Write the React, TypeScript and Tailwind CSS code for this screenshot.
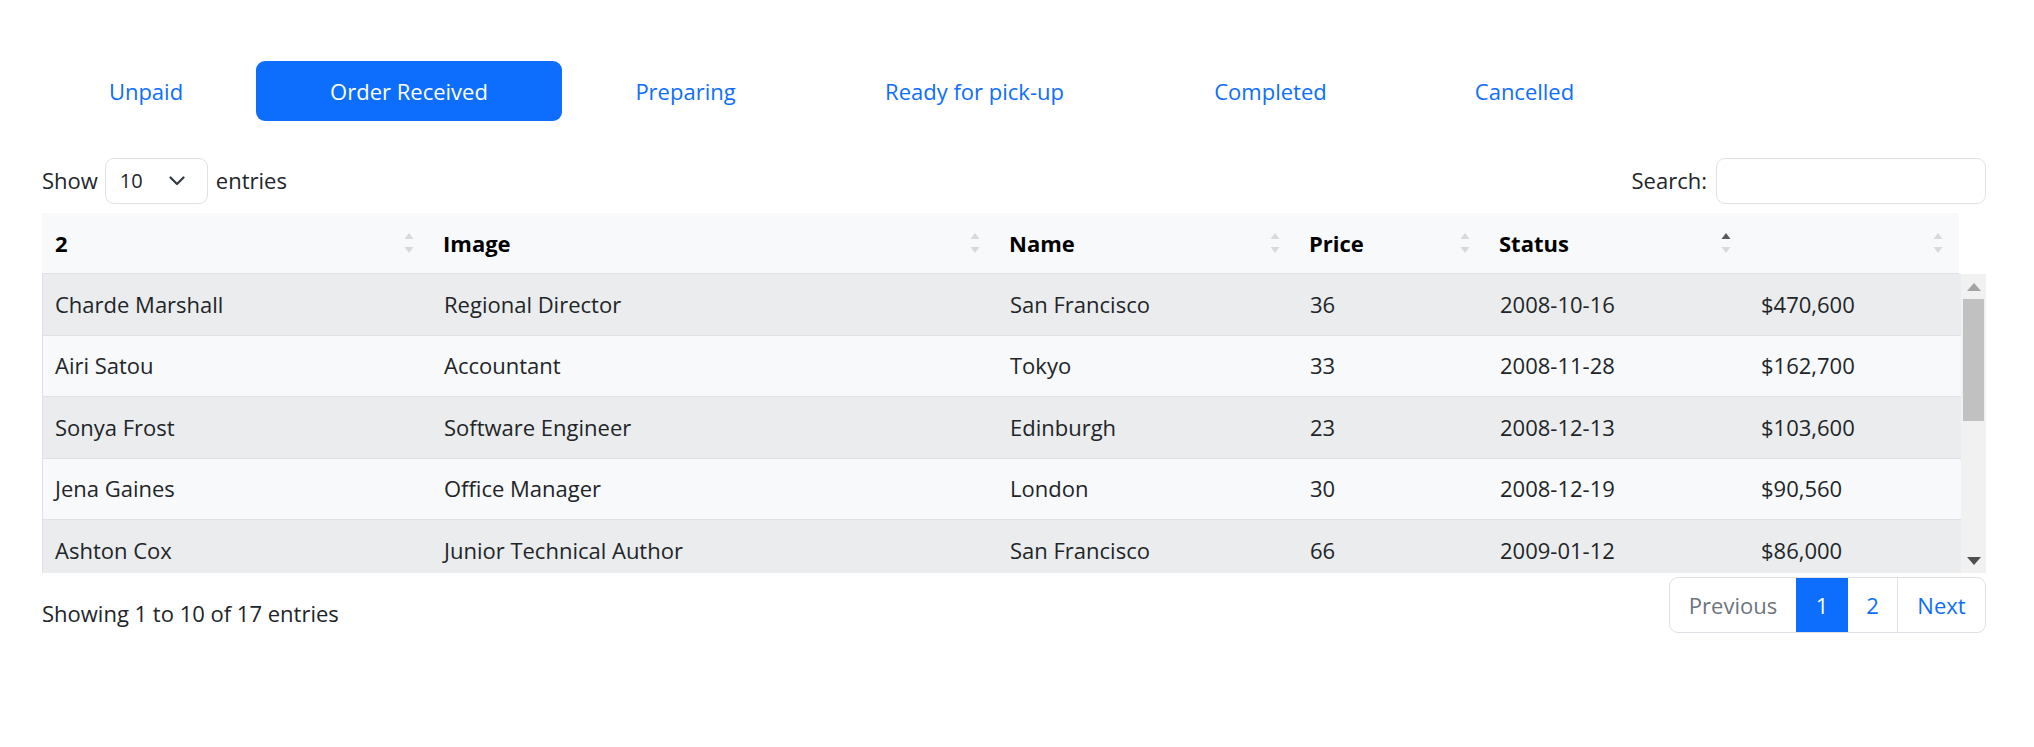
import React from 'react';

const tabs = [
  { label: 'Unpaid', w: 'w-[220px]' },
  { label: 'Order Received', w: 'w-[306px]', active: true },
  { label: 'Preparing', w: 'w-[247px]' },
  { label: 'Ready for pick-up', w: 'w-[331px]' },
  { label: 'Completed', w: 'w-[261px]' },
  { label: 'Cancelled', w: 'w-[247px]' },
];

const cols = [
  { title: '2', w: 'w-[388px]' },
  { title: 'Image', w: 'w-[566px]' },
  { title: 'Name', w: 'w-[300px]' },
  { title: 'Price', w: 'w-[190px]' },
  { title: 'Status', w: 'w-[261px]', sorted: true },
  { title: '', w: 'w-[212px]' },
];

// only the rows that show inside the 200px scroll area
const rows = [
  ['Charde Marshall', 'Regional Director', 'San Francisco', '36', '2008-10-16', '$470,600'],
  ['Airi Satou', 'Accountant', 'Tokyo', '33', '2008-11-28', '$162,700'],
  ['Sonya Frost', 'Software Engineer', 'Edinburgh', '23', '2008-12-13', '$103,600'],
  ['Jena Gaines', 'Office Manager', 'London', '30', '2008-12-19', '$90,560'],
  ['Ashton Cox', 'Junior Technical Author', 'San Francisco', '66', '2009-01-12', '$86,000'],
];

const SortIcon = ({ up = false }: { up?: boolean }) => (
  <svg width="10" height="20" viewBox="0 0 10 20">
    <path d="M0.5 6 L5 0 L9.5 6Z" fill={up ? '#5a5a5a' : '#d9d9d9'} />
    <path d="M0.5 14 L5 20 L9.5 14Z" fill="#d9d9d9" />
  </svg>
);

const Tri = ({ down = false, color }: { down?: boolean; color: string }) => (
  <svg width="14" height="8" viewBox="0 0 14 8">
    <path d={down ? 'M0 0 L14 0 L7 8Z' : 'M0 8 L14 8 L7 0Z'} fill={color} />
  </svg>
);

export default function App() {
  return (
    <div className="min-h-screen bg-white pl-[42px] pr-[48px] pt-[61px] font-['Open_Sans',sans-serif] text-[22px] text-[#212529]">
      {/* status tabs */}
      <div className="-ml-[6px] flex h-[60px]">
        {tabs.map((t) => (
          <div
            key={t.label}
            className={`${t.w} flex items-center justify-center rounded-[9px] ${
              t.active ? 'bg-[#0d6efd] text-white' : 'text-[#0d6efd]'
            }`}
          >
            {t.label}
          </div>
        ))}
      </div>

      {/* length + search */}
      <div className="mt-[36px] flex h-[47px] items-center justify-between">
        <div className="flex items-center">
          <span>Show</span>
          <div className="ml-[7px] mr-[8px] flex h-[46px] w-[103px] items-center justify-between rounded-[9px] border border-[#dee2e6] pl-[14px] pr-[22px] text-[20px]">
            <span>10</span>
            <svg width="16" height="10" viewBox="0 0 16 10" fill="none">
              <path d="M1.5 1.5 L8 8 L14.5 1.5" stroke="#343a40" strokeWidth="2.2" strokeLinecap="round" strokeLinejoin="round" />
            </svg>
          </div>
          <span>entries</span>
        </div>
        <div className="flex items-center">
          <span>Search:</span>
          <div className="ml-[9px] h-[46px] w-[270px] rounded-[9px] border border-[#dee2e6]" />
        </div>
      </div>

      {/* table head */}
      <div className="mt-[9px] flex h-[61px] w-[1917px] border-b border-[#dee2e6] bg-[#f8f9fa] font-bold text-black">
        {cols.map((c, i) => (
          <div key={i} className={`${c.w} flex items-center justify-between pl-[13px] pr-[16px]`}>
            <span>{c.title}</span>
            <SortIcon up={c.sorted} />
          </div>
        ))}
      </div>

      {/* table body with scrollbar */}
      <div className="flex h-[299px]">
        <div className="flex-1 overflow-hidden border-l border-[#dee2e6]">
          {rows.map((r, i) => (
            <div
              key={i}
              className={`flex h-[61.5px] border-b border-[#dee2e6] ${i % 2 === 0 ? 'bg-[#ebeced]' : 'bg-[#f8f9fa]'}`}
            >
              {r.map((cell, j) => (
                <div key={j} className={`${cols[j].w} ${j === 0 ? 'pl-[12px]' : 'pl-[13px]'} flex shrink-0 items-center`}>
                  {cell}
                </div>
              ))}
            </div>
          ))}
        </div>
        <div className="flex w-[25px] flex-col bg-[#f1f1f1]">
          <div className="flex h-[25px] items-center justify-center">
            <Tri color="#a3a3a3" />
          </div>
          <div className="mx-[2px] h-[122px] bg-[#c1c1c1]" />
          <div className="flex-1" />
          <div className="flex h-[25px] items-center justify-center">
            <Tri down color="#505050" />
          </div>
        </div>
      </div>

      {/* footer */}
      <div className="flex items-start justify-between">
        <div className="pt-[22px] leading-[36px]">Showing 1 to 10 of 17 entries</div>
        <div className="mt-[4px] flex h-[56px] overflow-hidden rounded-[9px] border border-[#dee2e6]">
          <div className="flex w-[126px] items-center justify-center text-[#6c757d]">Previous</div>
          <div className="flex w-[52px] items-center justify-center bg-[#0d6efd] text-white">1</div>
          <div className="flex w-[50px] items-center justify-center border-r border-[#dee2e6] text-[#0d6efd]">2</div>
          <div className="flex w-[87px] items-center justify-center text-[#0d6efd]">Next</div>
        </div>
      </div>
    </div>
  );
}
